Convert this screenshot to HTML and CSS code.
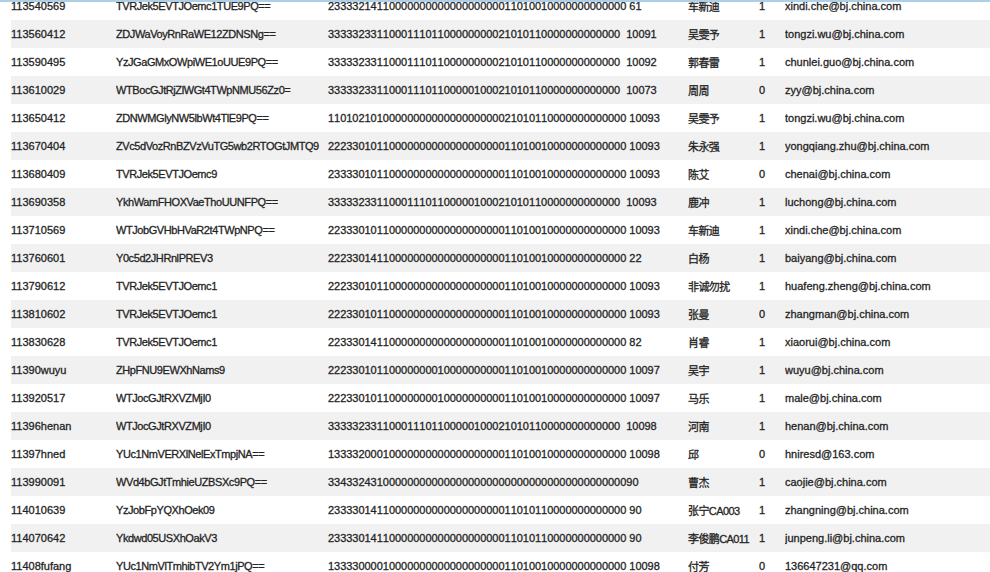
FILE: index.html
```html
<!DOCTYPE html>
<html lang="zh">
<head>
<meta charset="utf-8">
<title>Users</title>
<link rel="stylesheet" href="styles.css">
</head>
<body>
<div class="topline"></div>
<div class="scroller">
<table class="grid">
<colgroup><col class="c1"><col class="c2"><col class="c3"><col class="c4"><col class="c5"><col class="c6"></colgroup>
<tbody>
<tr><td>113540569</td><td class="key">TVRJek5EVTJOemc1TUE9PQ==</td><td class="bits">2333321411000000000000000000011010010000000000000 61</td><td class="name">车新迪</td><td>1</td><td>xindi.che@bj.china.com</td></tr>
<tr><td>113560412</td><td class="key">ZDJWaVoyRnRaWE12ZDNSNg==</td><td class="bits">333332331100011101100000000021010110000000000000  10091</td><td class="name">吴雯予</td><td>1</td><td>tongzi.wu@bj.china.com</td></tr>
<tr><td>113590495</td><td class="key">YzJGaGMxOWpiWE1oUUE9PQ==</td><td class="bits">333332331100011101100000000021010110000000000000  10092</td><td class="name">郭春雷</td><td>1</td><td>chunlei.guo@bj.china.com</td></tr>
<tr><td>113610029</td><td class="key">WTBocGJtRjZlWGt4TWpNMU56Zz0=</td><td class="bits">333332331100011101100000100021010110000000000000  10073</td><td class="name">周周</td><td>0</td><td>zyy@bj.china.com</td></tr>
<tr><td>113650412</td><td class="key">ZDNWMGlyNW5lbWt4TlE9PQ==</td><td class="bits">1101021010000000000000000000021010110000000000000 10093</td><td class="name">吴雯予</td><td>1</td><td>tongzi.wu@bj.china.com</td></tr>
<tr><td>113670404</td><td class="key">ZVc5dVozRnBZVzVuTG5wb2RTOGtJMTQ9</td><td class="bits">2223301011000000000000000000011010010000000000000 10093</td><td class="name">朱永强</td><td>1</td><td>yongqiang.zhu@bj.china.com</td></tr>
<tr><td>113680409</td><td class="key">TVRJek5EVTJOemc9</td><td class="bits">2333301011000000000000000000011010010000000000000 10093</td><td class="name">陈艾</td><td>0</td><td>chenai@bj.china.com</td></tr>
<tr><td>113690358</td><td class="key">YkhWamFHOXVaeThoUUNFPQ==</td><td class="bits">333332331100011101100000100021010110000000000000  10093</td><td class="name">鹿冲</td><td>1</td><td>luchong@bj.china.com</td></tr>
<tr><td>113710569</td><td class="key">WTJobGVHbHVaR2t4TWpNPQ==</td><td class="bits">2233301011000000000000000000011010010000000000000 10093</td><td class="name">车新迪</td><td>1</td><td>xindi.che@bj.china.com</td></tr>
<tr><td>113760601</td><td class="key">Y0c5d2JHRnlPREV3</td><td class="bits">2223301411000000000000000000011010010000000000000 22</td><td class="name">白杨</td><td>1</td><td>baiyang@bj.china.com</td></tr>
<tr><td>113790612</td><td class="key">TVRJek5EVTJOemc1</td><td class="bits">2223301011000000000000000000011010010000000000000 10093</td><td class="name">非诚勿扰</td><td>1</td><td>huafeng.zheng@bj.china.com</td></tr>
<tr><td>113810602</td><td class="key">TVRJek5EVTJOemc1</td><td class="bits">2223301011000000000000000000011010010000000000000 10093</td><td class="name">张曼</td><td>0</td><td>zhangman@bj.china.com</td></tr>
<tr><td>113830628</td><td class="key">TVRJek5EVTJOemc1</td><td class="bits">2233301411000000000000000000011010010000000000000 82</td><td class="name">肖睿</td><td>1</td><td>xiaorui@bj.china.com</td></tr>
<tr><td>11390wuyu</td><td class="key">ZHpFNU9EWXhNams9</td><td class="bits">2223301011000000001000000000011010010000000000000 10097</td><td class="name">吴宇</td><td>1</td><td>wuyu@bj.china.com</td></tr>
<tr><td>113920517</td><td class="key">WTJocGJtRXVZMjI0</td><td class="bits">2223301011000000001000000000011010010000000000000 10097</td><td class="name">马乐</td><td>1</td><td>male@bj.china.com</td></tr>
<tr><td>11396henan</td><td class="key">WTJocGJtRXVZMjI0</td><td class="bits">333332331100011101100000100021010110000000000000  10098</td><td class="name">河南</td><td>1</td><td>henan@bj.china.com</td></tr>
<tr><td>11397hned</td><td class="key">YUc1NmVERXlNelExTmpjNA==</td><td class="bits">1333320001000000000000000000011010010000000000000 10098</td><td class="name">邱</td><td>0</td><td>hniresd@163.com</td></tr>
<tr><td>113990091</td><td class="key">WVd4bGJtTmhieUZBSXc9PQ==</td><td class="bits">334332431000000000000000000000000000000000000000090</td><td class="name">曹杰</td><td>1</td><td>caojie@bj.china.com</td></tr>
<tr><td>114010639</td><td class="key">YzJobFpYQXhOek09</td><td class="bits">2333301411000000000000000000011010110000000000000 90</td><td class="name">张宁CA003</td><td>1</td><td>zhangning@bj.china.com</td></tr>
<tr><td>114070642</td><td class="key">Ykdwd05USXhOakV3</td><td class="bits">2333301411000000000000000000011010110000000000000 90</td><td class="name">李俊鹏CA011</td><td>1</td><td>junpeng.li@bj.china.com</td></tr>
<tr><td>11408fufang</td><td class="key">YUc1NmVlTmhibTV2Ym1jPQ==</td><td class="bits">1333300001000000000000000000011010010000000000000 10098</td><td class="name">付芳</td><td>0</td><td>136647231@qq.com</td></tr>
</tbody>
</table>
</div>
</body>
</html>
```
FILE: styles.css
```css
html, body {
  margin: 0;
  padding: 0;
  height: 100%;
  overflow: hidden;
  background: #fff;
}
.topline {
  position: relative;
  z-index: 1;
  height: 2px;
  background: #aecfe8;
}
.scroller {
  margin-top: -10px;
  padding-left: 11px;
}
.grid {
  width: 979px;
  border-collapse: collapse;
  table-layout: fixed;
  font-family: "Liberation Sans", "Noto Sans CJK SC", sans-serif;
  font-size: 11px;
  color: #1a1a1a;
  -webkit-text-stroke: 0.3px #2a2a2a;
}
.c1 { width: 105px; }
.c2 { width: 212px; }
.c3 { width: 360px; }
.c4 { width: 71px; }
.c5 { width: 26px; }
.grid td {
  height: 28px;
  padding: 0;
  white-space: pre;
  overflow: hidden;
}
.grid tr:nth-child(even) {
  background: #f1f1f1;
}
.grid .key {
  letter-spacing: -0.42px;
}
.grid .bits {
  font-kerning: none;
  letter-spacing: -0.03px;
}
.grid .name {
  letter-spacing: -0.6px;
}
```
